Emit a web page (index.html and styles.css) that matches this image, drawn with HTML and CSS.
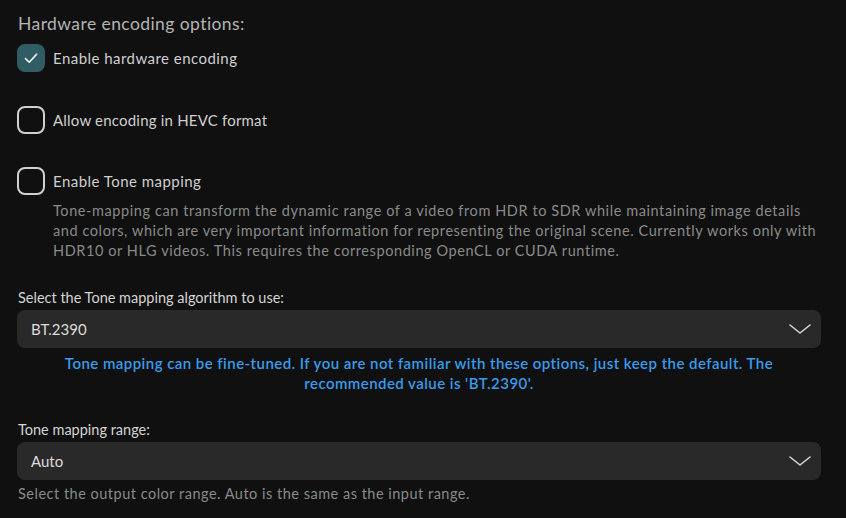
FILE: index.html
```html
<!DOCTYPE html>
<html>
<head>
<meta charset="utf-8">
<link rel="stylesheet" href="styles.css">
</head>
<body>
<div class="page">
  <h3 class="heading">Hardware encoding options:</h3>
  <label class="check">
    <span class="box checked">
      <svg viewBox="0 0 28 28" width="28" height="28"><path d="M7.5 14.5 L12 19 L20.5 9.5" fill="none" stroke="#ffffff" stroke-width="1.8" stroke-linecap="round" stroke-linejoin="round"/></svg>
    </span>
    <span class="label">Enable hardware encoding</span>
  </label>
  <label class="check">
    <span class="box"></span>
    <span class="label tight">Allow encoding in HEVC format</span>
  </label>
  <div class="check-group">
    <label class="check">
      <span class="box"></span>
      <span class="label">Enable Tone mapping</span>
    </label>
    <div class="desc">Tone-mapping can transform the dynamic range of a video from HDR to SDR while maintaining image details and colors, which are very important information for representing the original scene. Currently works only with HDR10 or HLG videos. This requires the corresponding OpenCL or CUDA runtime.</div>
  </div>

  <div class="field">
    <div class="field-label">Select the Tone mapping algorithm to use:</div>
    <div class="select">
      <span>BT.2390</span>
      <svg class="chev" viewBox="0 0 22 10" width="22" height="10"><path d="M1 1 L11 9 L21 1" fill="none" stroke="#d6d6d6" stroke-width="1.6" stroke-linecap="round" stroke-linejoin="round"/></svg>
    </div>
    <div class="note">Tone mapping can be fine-tuned. If you are not familiar with these options, just keep the default. The recommended value is 'BT.2390'.</div>
  </div>

  <div class="field last">
    <div class="field-label">Tone mapping range:</div>
    <div class="select">
      <span>Auto</span>
      <svg class="chev" viewBox="0 0 22 10" width="22" height="10"><path d="M1 1 L11 9 L21 1" fill="none" stroke="#d6d6d6" stroke-width="1.6" stroke-linecap="round" stroke-linejoin="round"/></svg>
    </div>
    <div class="hint">Select the output color range. Auto is the same as the input range.</div>
  </div>
</div>
</body>
</html>
```
FILE: styles.css
```css
html, body {
  margin: 0;
  padding: 0;
  background: #101010;
}
body {
  font-family: Lato, "Noto Sans", sans-serif;
  color: #d0d0d0;
  width: 846px;
  height: 518px;
  overflow: hidden;
}
.page {
  padding: 12px 25px 0 17px;
}
.heading {
  margin: 0 0 0 1px;
  font-size: 17.5px;
  font-weight: 400;
  color: #b4b4b4;
  line-height: 24px;
  letter-spacing: 0.42px;
}
.check {
  display: flex;
  align-items: center;
  gap: 8px;
  height: 28px;
  margin-top: 8px;
}
.check + .check {
  margin-top: 34px;
}
.check-group {
  margin-top: 33px;
}
.box {
  border: 2px solid #d0d0d0;
  border-radius: 8px;
  display: flex;
  align-items: center;
  justify-content: center;
  box-sizing: content-box;
  flex: none;
  width: 24px;
  height: 24px;
}
.box.checked {
  border-color: #2f5d63;
  background: #2f5d63;
}
.box svg {
  width: 26px;
  height: 26px;
}
.label {
  font-size: 15px;
  color: #cfcfcf;
  letter-spacing: 0.46px;
}
.label.tight {
  letter-spacing: 0.2px;
}
.desc {
  margin: 6px 0 0 36px;
  font-size: 14.5px;
  line-height: 20px;
  color: #8a8a8a;
  letter-spacing: 0.58px;
}
.field {
  margin-top: 28px;
}
.field-label {
  font-size: 14.5px;
  color: #d4d4d4;
  line-height: 18px;
  margin-left: 1px;
}
.select {
  margin-top: 3px;
  height: 38px;
  background: #292929;
  border-radius: 8px;
  display: flex;
  align-items: center;
  justify-content: space-between;
  padding: 0 10px 0 14px;
  font-size: 15px;
  color: #dcdcdc;
}
.chev {
  display: block;
}
.note {
  text-align: center;
  color: #3a9bea;
  font-size: 15px;
  font-weight: 600;
  line-height: 20px;
  margin-top: 5px;
  padding: 0 30px;
  letter-spacing: 0.45px;
}
.field.last {
  margin-top: 28px;
}
.hint {
  margin: 5px 0 0 1px;
  font-size: 14.5px;
  color: #8a8a8a;
  line-height: 18px;
  letter-spacing: 0.5px;
}
```
